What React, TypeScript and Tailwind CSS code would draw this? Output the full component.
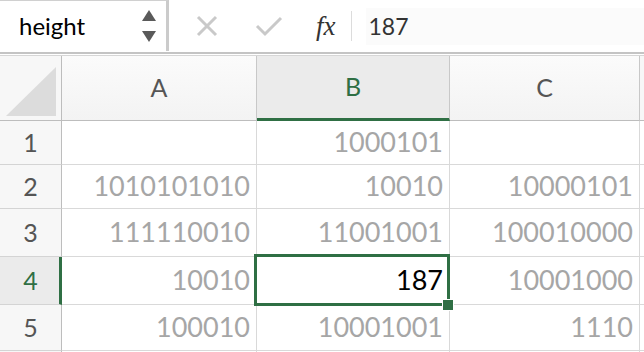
const rows = [
  { n: "1", h: "h-[44px]", a: "", b: "1000101", c: "" },
  { n: "2", h: "h-[44px]", a: "1010101010", b: "10010", c: "10000101" },
  { n: "3", h: "h-[48px]", a: "111110010", b: "11001001", c: "100010000" },
  { n: "4", h: "h-[48px]", a: "10010", b: "187", c: "10001000", active: true },
  { n: "5", h: "h-[46px]", a: "100010", b: "10001001", c: "1110" },
  { n: "", h: "h-[46px]", a: "", b: "", c: "" },
];

function Cell({ value, width, active }: { value: string; width: string; active?: boolean }) {
  return (
    <div
      className={`relative ${width} h-full flex items-center justify-end pr-[6px] border-r border-b border-[#d9d9d9] text-[27px] ${
        active ? "text-black" : "text-[#a6a6a6]"
      }`}
    >
      {value}
      {active && (
        <>
          <div className="absolute -left-[3px] -top-[3px] -right-[1px] -bottom-[2px] border-[3px] border-[#2f6f44] z-10 pointer-events-none" />
          <div className="absolute -right-[5px] -bottom-[7px] w-[12px] h-[12px] bg-[#2f6f44] border border-white z-20" />
        </>
      )}
    </div>
  );
}

export default function App() {
  return (
    <div className="w-[644px] h-[352px] overflow-hidden bg-white font-['Lato',sans-serif]">
      {/* formula bar */}
      <div className="flex h-[52px]">
        <div className="w-[169px] h-[51px] flex items-center border-t border-[#d0d0d0] border-r-[3px] border-r-[#cbcbcb]">
          <span className="pl-[19px] text-[24px] text-black flex-1">height</span>
          <div className="flex flex-col items-center gap-[10px] pr-[10px]">
            <svg width="14" height="11" viewBox="0 0 14 11">
              <polygon points="7,0 14,11 0,11" fill="#5a5a5a" />
            </svg>
            <svg width="14" height="11" viewBox="0 0 14 11">
              <polygon points="0,0 14,0 7,11" fill="#5a5a5a" />
            </svg>
          </div>
        </div>
        <div className="flex items-center flex-1 pl-[27px]">
          <svg width="22" height="22" viewBox="0 0 22 22">
            <path d="M2 2 L20 20 M20 2 L2 20" stroke="#c9c9c9" strokeWidth="3" />
          </svg>
          <svg width="28" height="22" viewBox="0 0 28 22" className="ml-[37px]">
            <path d="M2 11 L10 19 L26 3" stroke="#c9c9c9" strokeWidth="3" fill="none" />
          </svg>
          <span className="ml-[33px] font-['Liberation_Serif',serif] italic text-[27px] text-[#333] leading-none">fx</span>
          <div className="ml-[15px] w-px h-[30px] bg-[#dcdcdc]" />
          <div className="ml-[14px] flex-1 h-[37px] bg-[#fbfbfb] flex items-center pl-[3px] text-[23px] text-[#333]">
            187
          </div>
        </div>
      </div>
      <div className="h-[2px] bg-[#c4c4c4]" />
      <div className="h-[1px] bg-white" />
      <div className="h-[1px] bg-[#d6d6d6]" />

      {/* column headers */}
      <div className="flex h-[65px] text-[25px] text-[#555]">
        <div className="relative w-[62px] h-full border-r border-b border-[#bdbdbd] bg-[#f7f7f7]">
          <svg width="50" height="49" viewBox="0 0 50 49" className="absolute right-[5px] bottom-[4px]">
            <polygon points="50,0 50,49 0,49" fill="#dcdcdc" />
          </svg>
        </div>
        <div className="w-[195px] h-full flex items-center justify-center border-r border-b border-[#c8c8c8] border-b-[#bdbdbd] bg-gradient-to-b from-[#fbfbfb] to-[#f3f3f3]">
          A
        </div>
        <div className="w-[193px] h-full flex items-center justify-center border-r border-[#c8c8c8] border-b-[3px] border-b-[#2f6f44] bg-[#ebebeb] text-[#2f6f44]">
          B
        </div>
        <div className="w-[190px] h-full flex items-center justify-center border-r border-b border-[#c8c8c8] border-b-[#bdbdbd] bg-gradient-to-b from-[#fbfbfb] to-[#f3f3f3]">
          C
        </div>
        <div className="flex-1 h-full border-b border-[#bdbdbd] bg-[#f7f7f7]" />
      </div>

      {/* rows */}
      {rows.map((r, i) => (
        <div key={i} className={`flex ${r.h}`}>
          <div
            className={`w-[62px] h-full flex items-center justify-center border-b border-[#d4d4d4] text-[25px] ${
              r.active
                ? "bg-[#ebebeb] text-[#2f6f44] border-r-[3px] border-r-[#2f6f44] pl-[2px]"
                : "bg-[#f7f7f7] text-[#555] border-r border-r-[#bdbdbd]"
            }`}
          >
            {r.n}
          </div>
          <Cell value={r.a} width="w-[195px]" />
          <Cell value={r.b} width="w-[193px]" active={r.active} />
          <Cell value={r.c} width="w-[190px]" />
          <div className="flex-1 h-full border-b border-[#d9d9d9]" />
        </div>
      ))}
    </div>
  );
}
